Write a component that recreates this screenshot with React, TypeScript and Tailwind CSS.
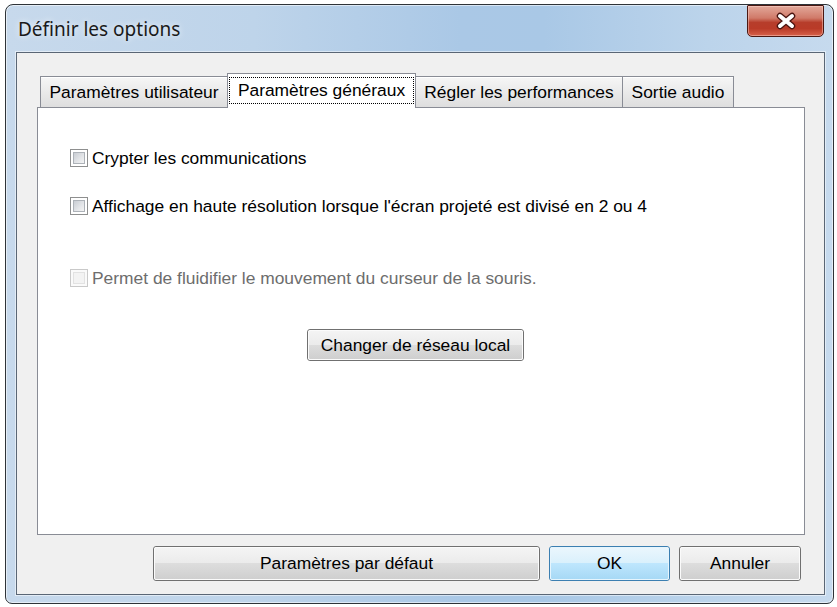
import React from "react";

function Checkbox({ disabled }: { disabled?: boolean }) {
  if (disabled) {
    return (
      <span className="flex w-[18px] h-[18px] shrink-0 border border-[#c9c9c9] bg-[#fafafa] p-[2px]">
        <span className="flex-1 border border-[#e2e2e2] bg-[#f3f3f3]" />
      </span>
    );
  }
  return (
    <span className="flex w-[18px] h-[18px] shrink-0 border border-[#8e8f8f] bg-white p-[2px]">
      <span className="flex-1 border border-[#adb2b8] bg-[linear-gradient(135deg,#c9cdd3_0%,#e4e6e9_60%,#f4f4f4_100%)]" />
    </span>
  );
}

function WinButton({
  children,
  className,
  primary,
}: {
  children: React.ReactNode;
  className: string;
  primary?: boolean;
}) {
  return (
    <div
      className={
        primary
          ? `rounded-[3px] border border-[#3c7fb1] ${className}`
          : `rounded-[3px] border border-[#707070] ${className}`
      }
    >
      <div
        className={
          primary
            ? "flex h-full items-center justify-center rounded-[2px] border border-[#e6f5fd] bg-[linear-gradient(to_bottom,#eaf6fd_0%,#d9f0fc_50%,#bee6fd_50%,#a7d9f5_100%)] text-[17.4px] text-black"
            : "flex h-full items-center justify-center rounded-[2px] border border-[#fbfbfb] bg-[linear-gradient(to_bottom,#f4f4f4_0%,#ebebeb_50%,#dddddd_50%,#cfcfcf_100%)] text-[17.4px] text-black"
        }
      >
        {children}
      </div>
    </div>
  );
}

export default function App() {
  return (
    <div className="w-[837px] h-[607px] bg-white pl-[5px] pt-[4px] font-['Liberation_Sans',Arial,sans-serif]">
      <div className="flex flex-col w-[829px] h-[600px] rounded-t-[8px] rounded-b-[7px] border border-[#2e3338] bg-[linear-gradient(90deg,#c7d9ec_0%,#bed4ea_30%,#aac8e6_55%,#a9c8e6_65%,#bcd4eb_85%,#c6daee_100%)] shadow-[inset_0_0_0_1px_rgba(255,255,255,0.55)]">
        {/* Title bar */}
        <div className="relative h-[47px] shrink-0 pl-[12px] pt-[12px]">
          <div className="font-['Noto_Sans',sans-serif] text-[19px] leading-[25px] text-[#1a1a1a] [text-shadow:0_0_6px_rgba(255,255,255,0.9)]">
            Définir les options
          </div>
          <div className="absolute top-0 right-[9px] w-[77px] h-[32px] rounded-b-[5px] rounded-t-[1px] border border-[#4b1812] bg-[linear-gradient(to_bottom,#e2a89a_0%,#d07a69_40%,#b73d2b_55%,#b93b28_75%,#d7614a_100%)] shadow-[inset_0_0_0_1px_rgba(255,220,210,0.45)] flex items-center justify-center">
            <svg width="22" height="18" viewBox="0 0 22 18">
              <path d="M5 4 L17 14 M17 4 L5 14" stroke="#4a1410" strokeWidth="6.5" strokeLinecap="round" />
              <path d="M5 4 L17 14 M17 4 L5 14" stroke="#ffffff" strokeWidth="4" strokeLinecap="round" />
            </svg>
          </div>
        </div>

        {/* Frame body */}
        <div className="flex-1 pl-[10px] pr-[8px] pb-[8px] flex flex-col">
          <div className="flex-1 flex flex-col border border-[#5a6675] bg-[#f0f0f0] shadow-[0_0_0_1px_rgba(255,255,255,0.5)] pt-[20px] pl-[20px] pr-[19px]">
            {/* Tabs */}
            <div className="flex h-[34px] items-end pl-[3px] text-[17.4px] text-black">
              <div className="w-[188px] h-[31px] border border-b-0 border-[#898c95] bg-[linear-gradient(to_bottom,#f6f6f6,#dedede)] shadow-[inset_0_1px_0_#ffffff] flex items-center justify-center">
                Paramètres utilisateur
              </div>
              <div className="relative z-10 -ml-[1px] -mb-[1px] w-[189px] h-[35px] border border-b-0 border-[#898c95] bg-white flex items-center justify-center pb-[2px]">
                <span className="absolute left-[1px] right-[1px] top-[3px] bottom-[4px] border border-dotted border-black" />
                Paramètres généraux
              </div>
              <div className="-ml-[1px] w-[208px] h-[31px] border border-b-0 border-[#898c95] bg-[linear-gradient(to_bottom,#f6f6f6,#dedede)] shadow-[inset_0_1px_0_#ffffff] flex items-center justify-center">
                Régler les performances
              </div>
              <div className="-ml-[1px] w-[112px] h-[31px] border border-b-0 border-[#898c95] bg-[linear-gradient(to_bottom,#f6f6f6,#dedede)] shadow-[inset_0_1px_0_#ffffff] flex items-center justify-center">
                Sortie audio
              </div>
            </div>

            {/* Panel */}
            <div className="h-[428px] shrink-0 border border-[#898c95] bg-white flex flex-col pl-[32px] pt-[39px] text-[17.4px]">
              <div className="h-[22px] flex items-center gap-[4px] text-black">
                <Checkbox />
                <span>Crypter les communications</span>
              </div>
              <div className="mt-[26px] h-[22px] flex items-center gap-[4px] text-black">
                <Checkbox />
                <span>Affichage en haute résolution lorsque l'écran projeté est divisé en 2 ou 4</span>
              </div>
              <div className="mt-[50px] h-[22px] flex items-center gap-[4px] text-[#6d6d6d]">
                <Checkbox disabled />
                <span>Permet de fluidifier le mouvement du curseur de la souris.</span>
              </div>
              <div className="mt-[40px] ml-[237px] flex">
                <WinButton className="w-[217px] h-[32px]">Changer de réseau local</WinButton>
              </div>
            </div>

            {/* Bottom buttons */}
            <div className="mt-[11px] flex justify-end gap-[9px] pr-[4px]">
              <WinButton className="w-[387px] h-[35px]">Paramètres par défaut</WinButton>
              <WinButton className="w-[121px] h-[35px]" primary>
                OK
              </WinButton>
              <WinButton className="w-[122px] h-[35px]">Annuler</WinButton>
            </div>
          </div>
        </div>
      </div>
    </div>
  );
}
